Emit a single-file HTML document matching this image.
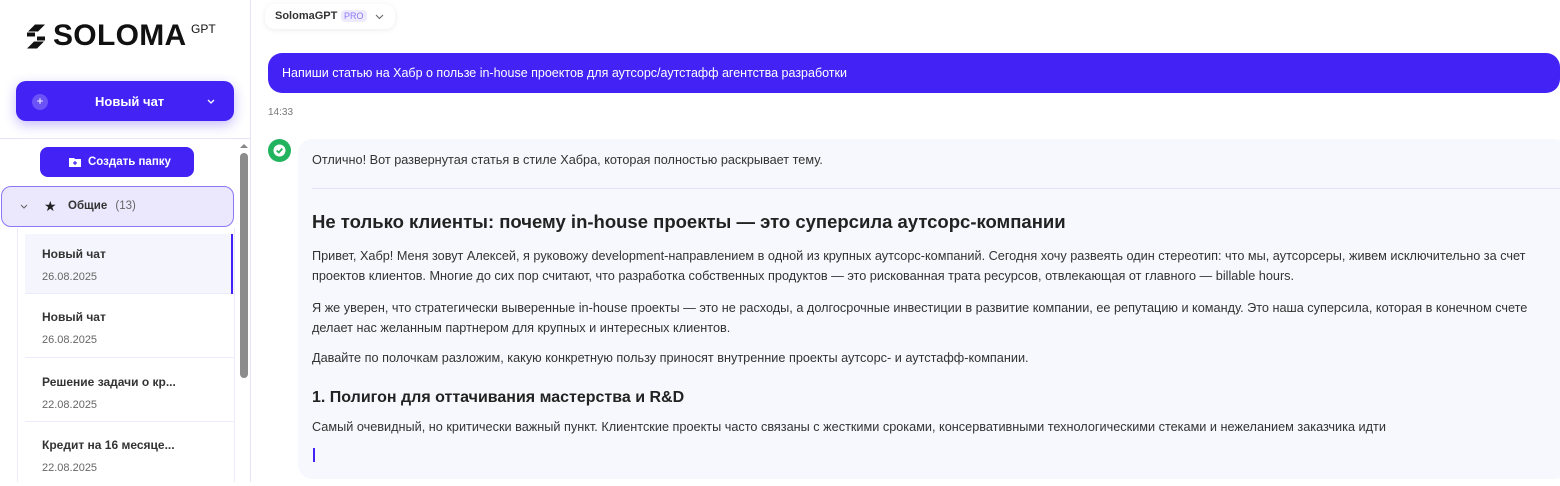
<!DOCTYPE html><html><head><meta charset="utf-8"><style>
*{box-sizing:border-box;margin:0;padding:0}
body{width:1560px;height:482px;overflow:hidden;background:#fff;font-family:"Liberation Sans",Arial,sans-serif;color:#333;position:relative}
.abs{position:absolute}
.sb{left:0;top:0;width:251px;height:482px;border-right:1px solid #e6e4fb}
.chat{left:25px;width:209px;height:64px;border-bottom:1px solid #ecebfd;padding:13px 0 0 17px}
.chat b{display:block;font-size:12px;color:#333;margin-bottom:6px}
.chat span{font-size:11px;color:#666}
p.t{font-size:12.7px;line-height:20px;color:#333}
</style></head><body>
<div class="abs sb"></div>
<div class="abs" style="left:0;top:138px;width:250px;height:1px;background:#e6e4fb"></div>
<svg class="abs" style="left:25px;top:24px" width="22" height="25" viewBox="0 0 22 24"><path d="M10 0H20L13 7H3ZM2 8H10V12H2ZM12 12H20V16H12ZM9 17H19L12 24H2Z" fill="#111"/></svg>
<div class="abs" style="left:53px;top:19px;font-size:30px;font-weight:bold;color:#111;letter-spacing:.3px">SOLOMA</div>
<div class="abs" style="left:191px;top:22px;font-size:12px;color:#111">GPT</div>
<div class="abs" style="left:16px;top:81px;width:218px;height:40px;border-radius:10px;background:#4222f5;box-shadow:0 4px 12px rgba(66,34,245,.3)"></div>
<div class="abs" style="left:32px;top:94px;width:16px;height:16px;border-radius:50%;background:#6a52f7;color:#fff;font-size:12px;line-height:15px;text-align:center">+</div>
<div class="abs" style="left:95px;top:94px;font-size:13px;font-weight:bold;color:#fff">Новый чат</div>
<svg class="abs" style="left:207px;top:99px" width="8" height="6"><path d="M1 1L4 4L7 1" stroke="#fff" fill="none" stroke-width="1.3"/></svg>
<div class="abs" style="left:40px;top:147px;width:154px;height:30px;border-radius:8px;background:#4222f5"></div>
<svg class="abs" style="left:69px;top:157px" width="12" height="10"><path d="M0 1H5L6 2H12V10H0Z" fill="#fff"/><path d="M6 4V8M4 6H8" stroke="#4222f5" stroke-width="1.2"/></svg>
<div class="abs" style="left:88px;top:156px;font-size:11.5px;font-weight:bold;color:#fff">Создать папку</div>
<div class="abs" style="left:1px;top:186px;width:233px;height:41px;border-radius:10px;background:#ebe7fd;border:1px solid #8a78f7"></div>
<svg class="abs" style="left:20px;top:204px" width="8" height="6"><path d="M1 1L4 4L7 1" stroke="#666" fill="none" stroke-width="1.1"/></svg>
<div class="abs" style="left:44px;top:198px;font-size:14px;color:#222">★</div>
<div class="abs" style="left:68px;top:200px;font-size:11.5px;font-weight:bold;color:#333">Общие <span style="font-weight:normal;color:#666;margin-left:5px">(13)</span></div>
<div class="abs" style="left:17px;top:228px;width:1px;height:254px;background:#ecebfd"></div>
<div class="abs" style="left:234px;top:228px;width:1px;height:254px;background:#ecebfd"></div>
<div class="abs chat" style="top:234px;height:60px;background:#f5f5fd;padding-top:13px"><b>Новый чат</b><span>26.08.2025</span></div>
<div class="abs" style="left:231px;top:234px;width:2px;height:60px;background:#4222f5"></div>
<div class="abs chat" style="top:294px;padding-top:16px"><b>Новый чат</b><span>26.08.2025</span></div>
<div class="abs chat" style="top:358px;padding-top:17px"><b>Решение задачи о кр...</b><span>22.08.2025</span></div>
<div class="abs chat" style="top:422px;padding-top:16px;border:none"><b>Кредит на 16 месяце...</b><span>22.08.2025</span></div>
<div class="abs" style="left:240px;top:153px;width:8px;height:225px;border-radius:4px;background:#8c8c8c"></div>
<svg class="abs" style="left:240px;top:143px" width="8" height="6"><path d="M0 5L4 1L8 5Z" fill="#888"/></svg>

<div class="abs" style="left:265px;top:4px;width:130px;height:25px;border-radius:10px;box-shadow:0 1px 6px rgba(0,0,0,.08);background:#fff"></div>
<div class="abs" style="left:275px;top:10px;font-size:11px;font-weight:bold;color:#333">SolomaGPT</div>
<div class="abs" style="left:341px;top:10px;font-size:9px;color:#8a78f7;background:#eeebfd;border-radius:4px;padding:1px 3px">PRO</div>
<svg class="abs" style="left:375px;top:14px" width="9" height="6"><path d="M1 1L4.5 4.5L8 1" stroke="#666" fill="none" stroke-width="1.1"/></svg>
<div class="abs" style="left:268px;top:53px;width:1292px;height:40px;border-radius:14px;background:#4222f5;color:#fff;font-size:12.5px;padding:13px 0 0 14px">Напиши статью на Хабр о пользе in-house проектов для аутсорс/аутстафф агентства разработки</div>
<div class="abs" style="left:268px;top:107px;font-size:10px;color:#777">14:33</div>
<div class="abs" style="left:268px;top:139px;width:23px;height:23px;border-radius:50%;background:#22b35e"></div>
<svg class="abs" style="left:268px;top:139px" width="23" height="23"><circle cx="11.5" cy="11.5" r="6" fill="#fff"/><path d="M8.7 11.6L10.8 13.5L14.3 9.6" stroke="#22b35e" stroke-width="1.8" fill="none"/></svg>
<div class="abs" style="left:298px;top:139px;width:1270px;height:340px;border-radius:14px;background:#f7f8fd"></div>
<div class="abs" style="left:312px;top:188px;width:1248px;height:1px;background:#e3e0fb"></div>
<div class="abs" style="left:312px;top:150px"><p class="t">Отлично! Вот развернутая статья в стиле Хабра, которая полностью раскрывает тему.</p></div>
<div class="abs" style="left:312px;top:211px;font-size:18.5px;font-weight:bold;color:#222">Не только клиенты: почему in-house проекты — это суперсила аутсорс-компании</div>
<div class="abs" style="left:312px;top:246px;width:1240px">
<p class="t" style="margin-bottom:12px">Привет, Хабр! Меня зовут Алексей, я руковожу development-направлением в одной из крупных аутсорс-компаний. Сегодня хочу развеять один стереотип: что мы, аутсорсеры, живем исключительно за счет проектов клиентов. Многие до сих пор считают, что разработка собственных продуктов — это рискованная трата ресурсов, отвлекающая от главного — billable hours.</p>
<p class="t" style="margin-bottom:10px">Я же уверен, что стратегически выверенные in-house проекты — это не расходы, а долгосрочные инвестиции в развитие компании, ее репутацию и команду. Это наша суперсила, которая в конечном счете делает нас желанным партнером для крупных и интересных клиентов.</p>
<p class="t">Давайте по полочкам разложим, какую конкретную пользу приносят внутренние проекты аутсорс- и аутстафф-компании.</p></div>
<div class="abs" style="left:312px;top:389px;font-size:16px;font-weight:bold;color:#222">1. Полигон для оттачивания мастерства и R&amp;D</div>
<div class="abs" style="left:312px;top:417px"><p class="t">Самый очевидный, но критически важный пункт. Клиентские проекты часто связаны с жесткими сроками, консервативными технологическими стеками и нежеланием заказчика идти</p></div>
<div class="abs" style="left:313px;top:448px;width:2px;height:14px;background:#4222f5"></div>
</body></html>
